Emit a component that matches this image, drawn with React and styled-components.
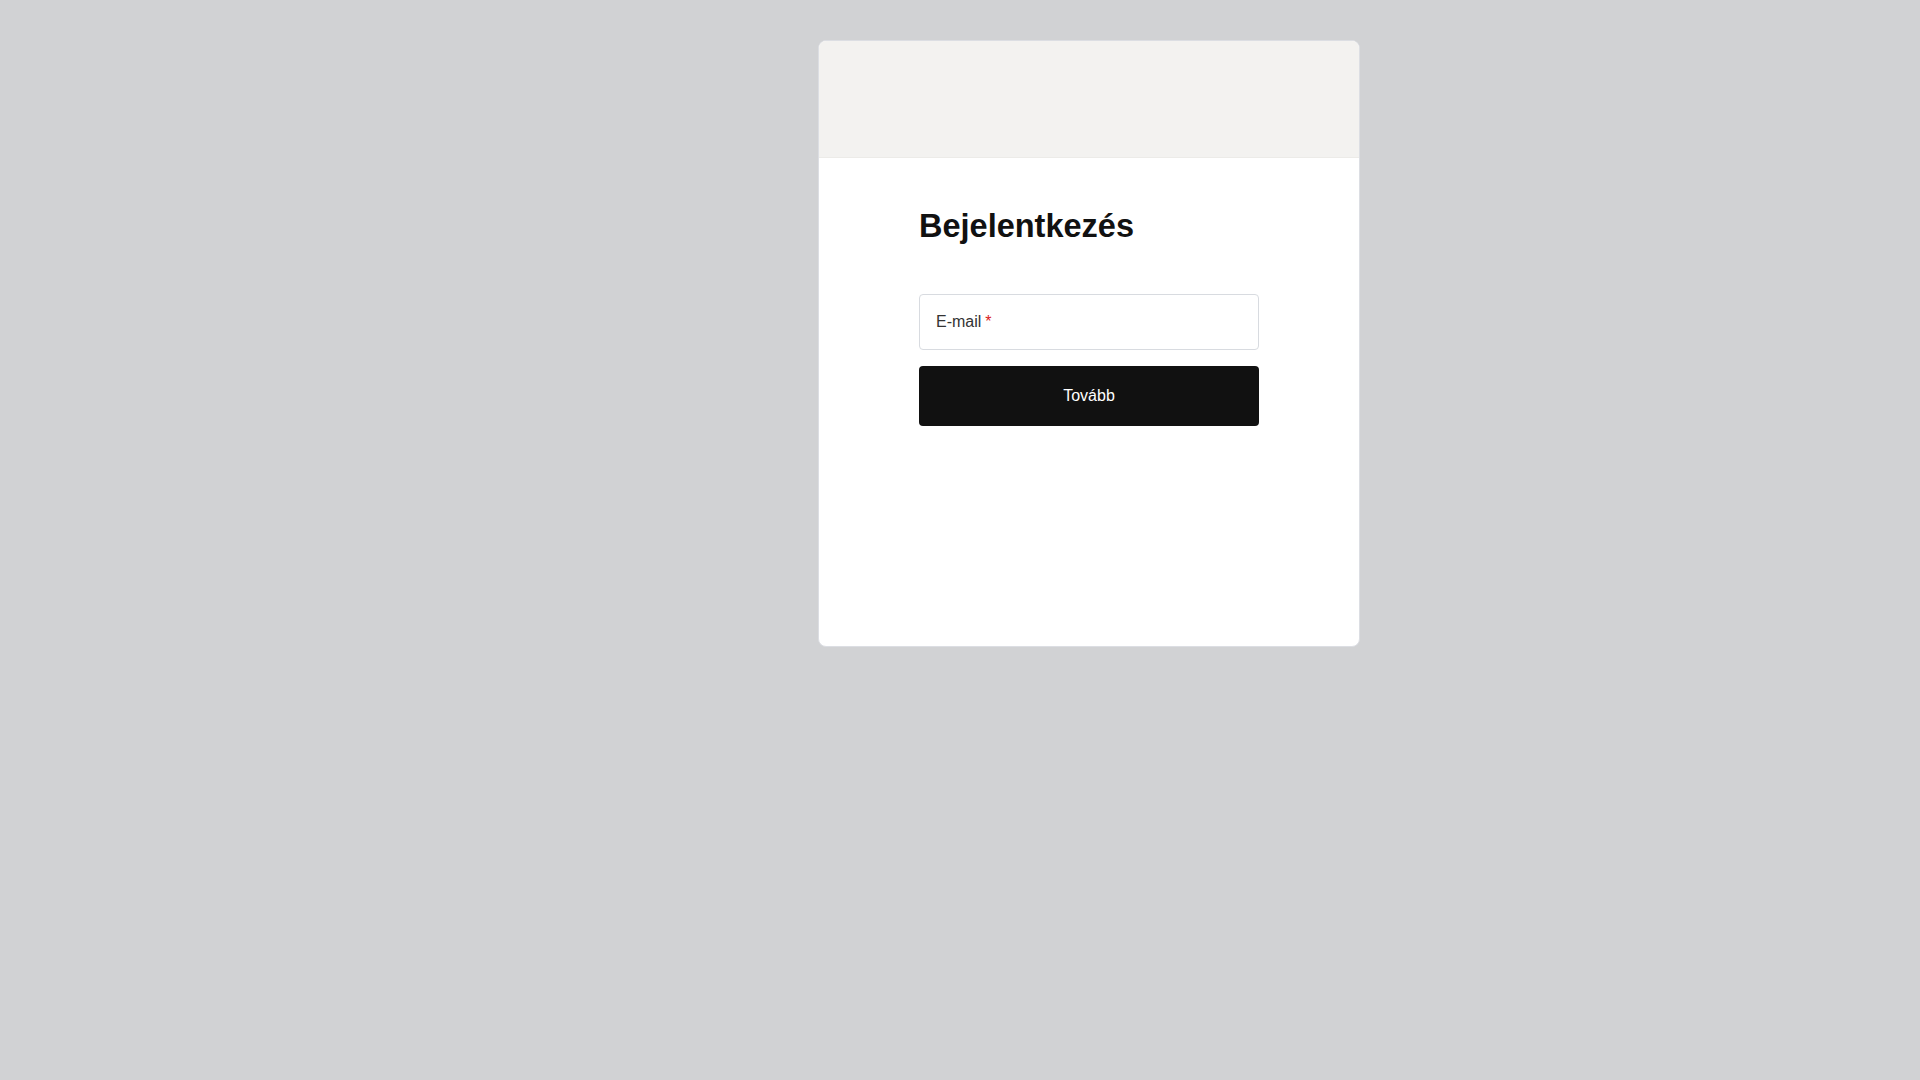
import React from 'react'
import styled, { createGlobalStyle } from 'styled-components'

const GlobalStyle = createGlobalStyle`
  html, body {
    margin: 0;
    padding: 0;
    background: #d1d2d4;
    font-family: "Liberation Sans", Arial, sans-serif;
  }
`

const Page = styled.div`
  min-height: 1080px;
  padding: 40px 0 0 818px;
  box-sizing: border-box;
`

const Card = styled.div`
  width: 542px;
  height: 607px;
  box-sizing: border-box;
  background: #ffffff;
  border: 1px solid #dcdee3;
  border-radius: 8px;
  overflow: hidden;
  display: flex;
  flex-direction: column;
`

const CardHeader = styled.div`
  height: 116px;
  background: #f3f2f0;
  border-bottom: 1px solid #ecebe8;
  flex-shrink: 0;
`

const CardBody = styled.div`
  padding: 49px 100px 0 100px;
  display: flex;
  flex-direction: column;
`

const Title = styled.h1`
  margin: 0 0 49px;
  font-size: 32.5px;
  line-height: 38px;
  font-weight: 700;
  color: #111111;
`

const Field = styled.label`
  height: 56px;
  box-sizing: border-box;
  border: 1px solid #d8dbe0;
  border-radius: 4px;
  display: flex;
  align-items: center;
  padding: 0 16px;
  font-size: 16px;
  color: #333333;
  cursor: text;
`

const Required = styled.span`
  color: #d9231d;
  margin-left: 4px;
`

const SubmitButton = styled.button`
  margin-top: 16px;
  height: 60px;
  border: none;
  border-radius: 4px;
  background: #111111;
  color: #ffffff;
  font-family: inherit;
  font-size: 16px;
  cursor: pointer;
`

const App = () => (
  <>
    <GlobalStyle />
    <Page>
      <Card>
        <CardHeader />
        <CardBody>
          <Title>Bejelentkezés</Title>
          <Field>
            E-mail<Required>*</Required>
          </Field>
          <SubmitButton type='button'>Tovább</SubmitButton>
        </CardBody>
      </Card>
    </Page>
  </>
)

export default App
